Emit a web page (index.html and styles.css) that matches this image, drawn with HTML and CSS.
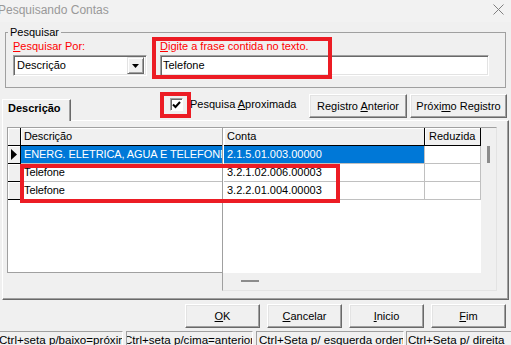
FILE: index.html
```html
<!DOCTYPE html>
<html lang="pt-BR">

<head>
    <meta charset="UTF-8">
    <meta name="viewport" content="width=device-width, initial-scale=1.0">
    <title>Pesquisando Contas</title>
    <link rel="stylesheet" href="styles.css">
</head>

<body>
    <div class="titlebar">
        <span class="title">Pesquisando Contas</span>
        <svg class="close" width="11" height="11" viewBox="0 0 11 11">
            <path d="M0.5 0.5L10.5 10.5M10.5 0.5L0.5 10.5" stroke="#808080" stroke-width="1" fill="none" />
        </svg>
    </div>

    <fieldset class="group">
        <legend>Pesquisar</legend>
        <div class="group-body">
            <div class="field field-by">
                <label class="red"><u>P</u>esquisar Por:</label>
                <div class="combo">
                    <span>Descrição</span>
                    <span class="combo-btn">
                        <svg width="7" height="4" viewBox="0 0 7 4"><polygon points="0,0 7,0 3.5,4" fill="#000" /></svg>
                    </span>
                </div>
            </div>
            <div class="field field-text">
                <label class="red"><u>D</u>igite a frase contida no texto.</label>
                <div class="edit">Telefone</div>
            </div>
        </div>
    </fieldset>

    <div class="tabbar">
        <div class="tab">Descrição</div>
        <div class="check">
            <span class="box">
                <svg width="11" height="11" viewBox="0 0 11 11"><path d="M2 5.5L4.5 8L9 3" stroke="#000" stroke-width="2" fill="none" /></svg>
            </span>
            <span>Pesquisa <u>A</u>proximada</span>
        </div>
        <div class="btn btn-prev"><span>Registro <u>A</u>nterior</span></div>
        <div class="btn btn-next"><span>Próxi<u>m</u>o Registro</span></div>
    </div>

    <div class="tabpage">
        <div class="grid">
            <div class="pane-left">
                <div class="row head">
                    <div class="ind"></div>
                    <div class="cell desc">Descrição</div>
                </div>
                <div class="row sel">
                    <div class="ind">
                        <svg width="6" height="11" viewBox="0 0 6 11"><polygon points="0,0 6,5.5 0,11" fill="#000" /></svg>
                    </div>
                    <div class="cell desc">ENERG. ELETRICA, AGUA E TELEFONE</div>
                </div>
                <div class="row">
                    <div class="ind"></div>
                    <div class="cell desc">Telefone</div>
                </div>
                <div class="row">
                    <div class="ind"></div>
                    <div class="cell desc">Telefone</div>
                </div>
            </div>
            <div class="pane-right">
                <div class="data">
                    <div class="row head">
                        <div class="cell conta">Conta</div>
                        <div class="cell red-col">Reduzida</div>
                    </div>
                    <div class="row sel">
                        <div class="cell conta">2.1.5.01.003.00000</div>
                        <div class="cell red-col"></div>
                    </div>
                    <div class="row">
                        <div class="cell conta">3.2.1.02.006.00003</div>
                        <div class="cell red-col"></div>
                    </div>
                    <div class="row">
                        <div class="cell conta">3.2.2.01.004.00003</div>
                        <div class="cell red-col"></div>
                    </div>
                </div>
                <div class="vscroll"><div class="vthumb"></div></div>
                <div class="hscroll"><div class="hthumb"></div></div>
                <div class="corner"></div>
            </div>
        </div>
    </div>

    <div class="buttons">
        <div class="btn btn-bottom"><span><u>O</u>K</span></div>
        <div class="btn btn-bottom"><span><u>C</u>ancelar</span></div>
        <div class="btn btn-bottom"><span><u>I</u>nicio</span></div>
        <div class="btn btn-bottom"><span><u>F</u>im</span></div>
    </div>

    <div class="statusbar">
        <div class="panel p1"><span>Ctrl+seta p/baixo=próximo</span></div>
        <div class="panel p2"><span>Ctrl+seta p/cima=anterior</span></div>
        <div class="panel p3"><span>Ctrl+Seta p/ esquerda ordem</span></div>
        <div class="panel p4"><span>Ctrl+Seta p/ direita</span></div>
    </div>

    <div class="mark mark-text"></div>
    <div class="mark mark-check"></div>
    <div class="mark mark-rows"></div>
</body>

</html>
```

FILE: styles.css
```css
body {
    margin: 0;
    width: 511px;
    height: 345px;
    overflow: hidden;
    position: relative;
    background-color: #f0f0f0;
    font-family: "Liberation Sans", Arial, sans-serif;
    font-size: 11px;
    line-height: 13px;
    color: #000;
}

u {
    text-decoration: underline;
}

/* title bar */
.titlebar {
    height: 22px;
    display: flex;
    justify-content: space-between;
    align-items: flex-start;
    background-color: #f2f2f2;
}

.title {
    margin: 3px 0 0 -2px;
    font-size: 12px;
    line-height: 14px;
    color: #999;
}

.close {
    margin: 4px 7px 0 0;
}

/* group box */
.group {
    margin: 4px 5px 0 5px;
    padding: 1px 0 11px 2px;
    border: 1px solid #a0a0a0;
    min-width: 0;
}

.group legend {
    padding: 0 2px;
    line-height: 13px;
}

.group-body {
    display: flex;
    gap: 13px;
    padding-left: 5px;
}

.field label {
    display: block;
    height: 13px;
    margin-bottom: 2px;
}

.red {
    color: #f00;
}

.field-by {
    width: 134px;
}

.field-text {
    width: 329px;
}

.combo,
.edit {
    height: 21px;
    box-sizing: border-box;
    background-color: #fff;
    border: 1px solid;
    border-color: #a0a0a0 #fff #fff #a0a0a0;
    box-shadow: inset 1px 1px #696969, inset -1px -1px #e3e3e3;
    display: flex;
    align-items: center;
}

.combo {
    justify-content: space-between;
    padding: 0 2px 0 3px;
}

.edit {
    padding-left: 2px;
}

.combo-btn {
    width: 17px;
    height: 17px;
    box-sizing: border-box;
    background-color: #f0f0f0;
    border: 1px solid;
    border-color: #e3e3e3 #696969 #696969 #e3e3e3;
    box-shadow: inset 1px 1px #fff, inset -1px -1px #a0a0a0;
    display: flex;
    align-items: center;
    justify-content: center;
}

/* tab strip */
.tabbar {
    height: 32px;
    display: flex;
    align-items: flex-start;
}

.tab {
    position: relative;
    z-index: 1;
    width: 69px;
    height: 22px;
    box-sizing: border-box;
    margin: 11px 0 0 2px;
    padding: 2px 0 0 5px;
    background-color: #f0f0f0;
    border-top: 1px solid #fff;
    border-left: 1px solid #fff;
    border-right: 1px solid #696969;
    box-shadow: inset -1px 0 #a0a0a0;
    font-weight: bold;
}

.check {
    display: flex;
    align-items: center;
    gap: 7px;
    margin: 10px 0 0 99px;
}

.box {
    width: 13px;
    height: 13px;
    box-sizing: border-box;
    background-color: #fff;
    border: 1px solid;
    border-color: #a0a0a0 #fff #fff #a0a0a0;
    box-shadow: inset 1px 1px #696969;
    display: flex;
}

.btn {
    height: 24px;
    box-sizing: border-box;
    background-color: #f0f0f0;
    border: 1px solid;
    border-color: #fff #696969 #696969 #fff;
    box-shadow: inset -1px -1px #a0a0a0, inset 1px 1px #e3e3e3;
    display: flex;
    align-items: center;
    justify-content: center;
    white-space: nowrap;
}

.btn-prev {
    width: 98px;
    margin: 6px 0 0 auto;
}

.btn-next {
    width: 97px;
    margin: 6px 4px 0 3px;
}

/* tab page and grid */
.tabpage {
    height: 180px;
    box-sizing: border-box;
    margin: 0 2px 0 2px;
    padding: 6px 10px 8px 4px;
    border: 1px solid;
    border-color: #fff #696969 #696969 #fff;
    box-shadow: inset -1px -1px #a0a0a0;
}

.grid {
    display: flex;
    align-items: flex-start;
    height: 164px;
}

.pane-left {
    width: 215px;
    height: 146px;
    box-sizing: border-box;
    background-color: #fff;
    border-top: 1px solid #a0a0a0;
    border-left: 1px solid #a0a0a0;
    border-bottom: 1px solid #a0a0a0;
}

.pane-right {
    width: 275px;
    height: 164px;
    box-sizing: border-box;
    border: 1px solid;
    border-color: #a0a0a0 #e3e3e3 #e3e3e3 #a0a0a0;
    display: grid;
    grid-template-columns: 1fr 15px;
    grid-template-rows: 1fr 17px;
}

.data {
    background-color: #fff;
    padding-left: 1px;
}

.row {
    display: flex;
    height: 18px;
}

.cell {
    box-sizing: border-box;
    height: 18px;
    line-height: 17px;
    white-space: nowrap;
    overflow: hidden;
    border-bottom: 1px solid #c0c0c0;
}

.ind {
    width: 13px;
    height: 18px;
    box-sizing: border-box;
    background-color: #f0f0f0;
    border-right: 1px solid #000;
    border-bottom: 1px solid #000;
    box-shadow: inset 1px 1px #fff;
    display: flex;
    align-items: center;
    padding-left: 3px;
}

.desc {
    width: 201px;
    padding-left: 3px;
    letter-spacing: -0.1px;
}

.conta {
    width: 201px;
    padding-left: 3px;
    border-right: 1px solid #c0c0c0;
}

.red-col {
    width: 56px;
    padding-left: 4px;
    border-right: 1px solid #c0c0c0;
}

.head .cell {
    background-color: #f0f0f0;
    box-shadow: inset 1px 1px #fff;
    border-bottom-color: #000;
}

.head .conta,
.head .red-col {
    border-right-color: #000;
}

.sel .desc,
.sel .conta {
    background-color: #0078d7;
    color: #fff;
}

.vscroll {
    background-color: #f0f0f0;
    padding: 18px 0 0 6px;
}

.vthumb {
    width: 3px;
    height: 17px;
    background-color: #8c8c8c;
}

.hscroll {
    background-color: #f0f0f0;
    padding: 7px 0 0 18px;
}

.hthumb {
    width: 18px;
    height: 2px;
    background-color: #8c8c8c;
}

.corner {
    background-color: #f0f0f0;
}

/* bottom buttons */
.buttons {
    display: flex;
    justify-content: flex-end;
    gap: 7px;
    margin: 4px 5px 0 0;
}

.btn-bottom {
    width: 75px;
}

/* status bar */
.statusbar {
    display: flex;
    height: 14px;
    margin-top: 3px;
    overflow: hidden;
    font-size: 11.6px;
}

.panel {
    box-sizing: border-box;
    height: 16px;
    padding-top: 1px;
    border: 1px solid;
    border-color: #a0a0a0 #fff #fff #a0a0a0;
    white-space: nowrap;
    overflow: hidden;
    flex-shrink: 0;
}

.p1 {
    width: 125px;
    margin-left: -2px;
}

.p2 {
    width: 127px;
    margin-left: 3px;
    text-indent: -3px;
}

.p3 {
    width: 148px;
    margin-left: 3px;
    padding-left: 2px;
}

.p4 {
    width: 110px;
    margin-left: 2px;
    padding-left: 1px;
}

/* red highlight boxes drawn over the screenshot */
.mark {
    position: absolute;
    box-sizing: border-box;
    border: 4px solid #ec1c24;
}

.mark-text {
    left: 152px;
    top: 37px;
    width: 180px;
    height: 42px;
}

.mark-check {
    left: 160px;
    top: 92px;
    width: 31px;
    height: 26px;
}

.mark-rows {
    left: 20px;
    top: 164px;
    width: 320px;
    height: 39px;
}
```
